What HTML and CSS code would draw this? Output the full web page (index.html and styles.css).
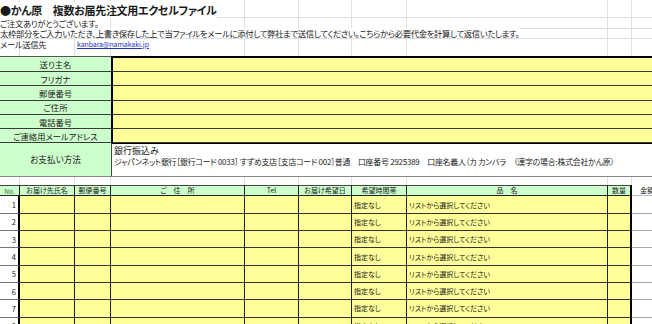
FILE: index.html
```html
<!DOCTYPE html>
<html lang="ja">
<head>
<meta charset="utf-8">
<title>かん原 複数お届先注文用エクセルファイル</title>
<link rel="stylesheet" href="styles.css">
</head>
<body>
<div class="sheet">
  <div class="intro">
    <div class="row r-title"><span class="txt">●かん原　複数お届先注文用エクセルファイル</span></div>
    <div class="row r-text"><span class="txt">ご注文ありがとうございます。</span></div>
    <div class="row r-text"><span class="txt">太枠部分をご入力いただき、上書き保存した上で当ファイルをメールに添付して弊社まで送信してください。こちらから必要代金を計算して返信いたします。</span></div>
    <div class="row r-text r-mail"><span class="txt mlabel">メール送信先</span><span class="txt mail">kanbara@namakaki.jp</span></div>
  </div>

  <div class="form">
    <div class="flabel first">送り主名</div><div class="fval first"></div>
    <div class="flabel">フリガナ</div><div class="fval"></div>
    <div class="flabel">郵便番号</div><div class="fval"></div>
    <div class="flabel">ご住所</div><div class="fval"></div>
    <div class="flabel">電話番号</div><div class="fval"></div>
    <div class="flabel">ご連絡用メールアドレス</div><div class="fval"></div>
    <div class="flabel pay">お支払い方法</div>
    <div class="payval">
      <div class="pay1">銀行振込み</div>
      <div class="pay2">ジャパンネット銀行［銀行コード 0033］ すずめ支店［支店コード 002］普通　口座番号 2925389　口座名義人（カ カンバラ　（漢字の場合:株式会社かん原）</div>
    </div>
  </div>

  <div class="gap"></div>

  <div class="table">
    <div class="th no">No.</div>
    <div class="th">お届け先氏名</div>
    <div class="th">郵便番号</div>
    <div class="th">ご　住　所</div>
    <div class="th">Tel</div>
    <div class="th">お届け希望日</div>
    <div class="th">希望時間帯</div>
    <div class="th">品　名</div>
    <div class="th qty">数量</div>
    <div class="th amt">金額</div>

    <div class="td no">1</div><div class="td"></div><div class="td"></div><div class="td"></div><div class="td"></div><div class="td"></div><div class="td sel">指定なし</div><div class="td sel">リストから選択してください</div><div class="td qty"></div><div class="td amt"></div>
    <div class="td no">2</div><div class="td"></div><div class="td"></div><div class="td"></div><div class="td"></div><div class="td"></div><div class="td sel">指定なし</div><div class="td sel">リストから選択してください</div><div class="td qty"></div><div class="td amt"></div>
    <div class="td no">3</div><div class="td"></div><div class="td"></div><div class="td"></div><div class="td"></div><div class="td"></div><div class="td sel">指定なし</div><div class="td sel">リストから選択してください</div><div class="td qty"></div><div class="td amt"></div>
    <div class="td no">4</div><div class="td"></div><div class="td"></div><div class="td"></div><div class="td"></div><div class="td"></div><div class="td sel">指定なし</div><div class="td sel">リストから選択してください</div><div class="td qty"></div><div class="td amt"></div>
    <div class="td no">5</div><div class="td"></div><div class="td"></div><div class="td"></div><div class="td"></div><div class="td"></div><div class="td sel">指定なし</div><div class="td sel">リストから選択してください</div><div class="td qty"></div><div class="td amt"></div>
    <div class="td no">6</div><div class="td"></div><div class="td"></div><div class="td"></div><div class="td"></div><div class="td"></div><div class="td sel">指定なし</div><div class="td sel">リストから選択してください</div><div class="td qty"></div><div class="td amt"></div>
    <div class="td no">7</div><div class="td"></div><div class="td"></div><div class="td"></div><div class="td"></div><div class="td"></div><div class="td sel">指定なし</div><div class="td sel">リストから選択してください</div><div class="td qty"></div><div class="td amt"></div>
    <div class="td no">8</div><div class="td"></div><div class="td"></div><div class="td"></div><div class="td"></div><div class="td"></div><div class="td sel">指定なし</div><div class="td sel">リストから選択してください</div><div class="td qty"></div><div class="td amt"></div>
  </div>
</div>
</body>
</html>
```

FILE: styles.css
```css
html, body {
  margin: 0;
  padding: 0;
  background: #fff;
}
body {
  width: 652px;
  height: 324px;
  overflow: hidden;
  font-family: "Noto Sans CJK JP", "Noto Sans", sans-serif;
  font-feature-settings: "palt";
  color: #1a1a1a;
}
.sheet {
  width: 652px;
  background:
    linear-gradient(#dfe0e2, #dfe0e2) 19px 0 / 1px 100% no-repeat,
    linear-gradient(#dfe0e2, #dfe0e2) 74px 0 / 1px 100% no-repeat,
    linear-gradient(#dfe0e2, #dfe0e2) 110px 0 / 1px 100% no-repeat,
    linear-gradient(#dfe0e2, #dfe0e2) 244px 0 / 1px 100% no-repeat,
    linear-gradient(#dfe0e2, #dfe0e2) 298px 0 / 1px 100% no-repeat,
    linear-gradient(#dfe0e2, #dfe0e2) 351px 0 / 1px 100% no-repeat,
    linear-gradient(#dfe0e2, #dfe0e2) 406px 0 / 1px 100% no-repeat,
    linear-gradient(#dfe0e2, #dfe0e2) 607px 0 / 1px 100% no-repeat,
    linear-gradient(#dfe0e2, #dfe0e2) 631px 0 / 1px 100% no-repeat,
    #fff;
}

/* intro text rows */
.intro {
  height: 56px;
  display: flex;
  flex-direction: column;
}
.row {
  box-sizing: border-box;
  border-bottom: 1px solid #dfe0e2;
  display: flex;
  align-items: center;
  white-space: nowrap;
}
.txt {
  background: #fff;
}
.r-title {
  height: 18px;
  font-size: 11px;
  font-weight: bold;
  letter-spacing: -0.3px;
  padding-top: 2px;
}
.r-text {
  height: 10.5px;
  font-size: 8.3px;
  letter-spacing: -0.3px;
  line-height: 10px;
}
.r-mail {
  border-bottom: none;
  height: 17px;
  align-items: flex-start;
}
.mlabel {
  width: 77px;
  background: transparent;
}
.mail {
  font-size: 7px;
  letter-spacing: -0.1px;
  color: #2233bb;
  text-decoration: underline;
  line-height: 10px;
  padding-right: 2px;
}

/* form */
.form {
  display: grid;
  grid-template-columns: 111px 1fr;
  grid-template-rows: 16px repeat(5, 14.3px) 34px;
}
.flabel {
  box-sizing: border-box;
  background: #ccffcc;
  border-bottom: 1px solid #3a3a3a;
  font-size: 8.3px;
  display: flex;
  align-items: center;
  justify-content: center;
  white-space: nowrap;
}
.flabel.first {
  border-top: 1px solid #555;
}
.fval {
  box-sizing: border-box;
  background: #ffff99;
  border-left: 2px solid #000;
  border-bottom: 1px solid #3a3a3a;
}
.fval.first {
  border-top: 2px solid #000;
}
.flabel.pay {
  border-bottom: 1px solid #888;
  font-size: 8.6px;
  padding-bottom: 2px;
}
.payval {
  box-sizing: border-box;
  background: #fff;
  border-left: 1px solid #444;
  border-top: 1px solid #000;
  border-bottom: 1px solid #888;
  padding: 1px 0 0 2px;
  white-space: nowrap;
}
.pay1 {
  font-size: 9px;
  line-height: 11px;
}
.pay2 {
  font-size: 7.9px;
  letter-spacing: -0.2px;
  line-height: 11px;
}

.gap {
  height: 8px;
}

/* order table */
.table {
  display: grid;
  grid-template-columns: 20px 55px 36px 134px 54px 53px 55px 201px 24px 1fr;
  grid-template-rows: 11px repeat(8, 17.3px);
}
.th {
  box-sizing: border-box;
  background: #ccffcc;
  border-top: 1px solid #444;
  border-right: 1px solid #222;
  border-bottom: 1px solid #222;
  font-size: 7px;
  display: flex;
  align-items: center;
  justify-content: center;
  white-space: nowrap;
  line-height: 1;
}
.th.no {
  color: #3b5f3b;
  font-size: 6.5px;
}
.th.qty {
  border-right: 2px solid #000;
}
.th.amt {
  background: #fff;
  border: none;
  border-bottom: 1px solid #bbb;
  justify-content: flex-start;
  padding-left: 8px;
}
.td {
  box-sizing: border-box;
  background: #ffff99;
  border-right: 1px solid #222;
  border-bottom: 1px solid #333;
  font-size: 7px;
  display: flex;
  align-items: center;
  white-space: nowrap;
  overflow: hidden;
}
.td.no {
  background: #fff;
  border-right: 2px solid #000;
  border-bottom: 1px solid #777;
  justify-content: flex-end;
  padding-right: 2px;
  font-size: 7.5px;
}
.td.sel {
  padding-left: 2px;
}
.td.qty {
  border-right: 2px solid #000;
}
.td.amt {
  background: #fff;
  border-right: none;
  border-bottom: 1px solid #a8a8a8;
}
```
